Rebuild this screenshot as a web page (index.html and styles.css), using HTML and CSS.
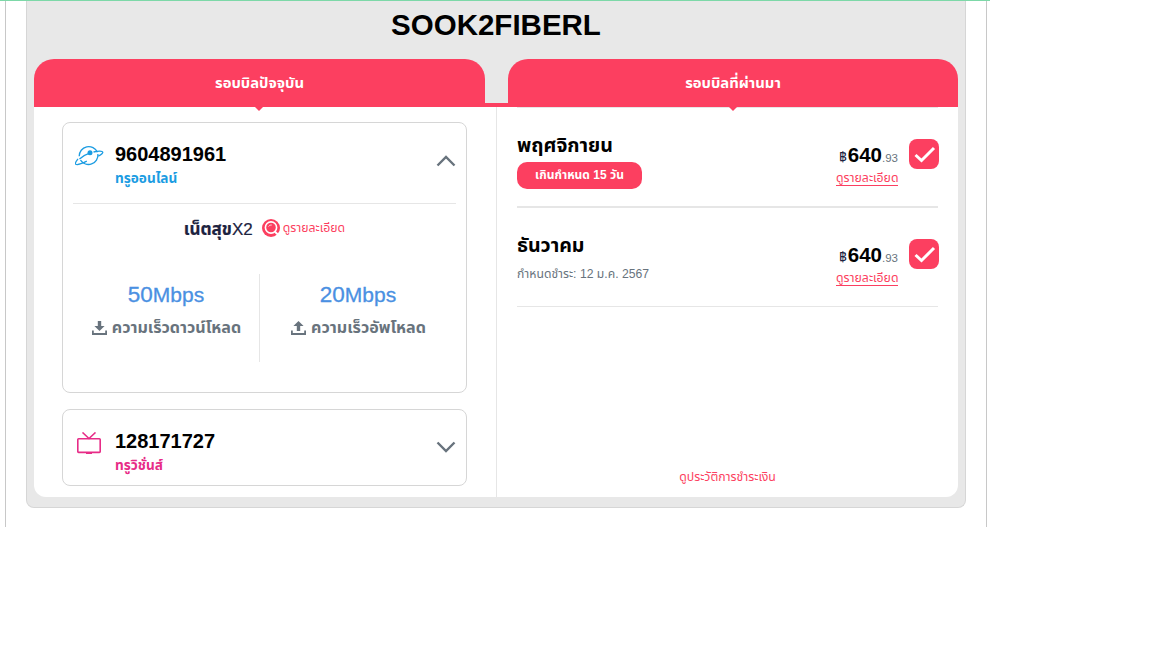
FILE: index.html
```
<!DOCTYPE html>
<html lang="th">
  <head>
    <meta charset="UTF-8" />
    <meta name="viewport" content="width=device-width, initial-scale=1.0" />
    <title>SOOK2FIBERL</title>
    <link rel="stylesheet" href="styles.css">
  </head>
  <body>
    <div class="top-line"></div>
    <main class="page">
      <section class="account">
        <h1 class="account-name">SOOK2FIBERL</h1>
        <div class="tabs">
          <div class="tab">รอบบิลปัจจุบัน</div>
          <div class="tab-joint"></div>
          <div class="tab">รอบบิลที่ผ่านมา</div>
        </div>
        <div class="panel">
          <div class="current">
            <div class="card card-online">
              <div class="card-head">
                <svg class="icon" width="30" height="22" viewBox="0 0 30 22" fill="none" stroke="#1b9ce2" stroke-width="1.3">
                  <path d="M4.200 11.300a9.500 9.500 0 0 1 18.200-4M22.900 9a9.500 9.500 0 0 1-17.400 6.200" />
                  <path d="M3 13.800C.8 16.500 0 18.500.8 19.200c1.500 1 6.500-.8 11-3" />
                  <path d="M4.500 14c2.500-2.400 6-4.400 9.500-5.600M18.500 7c5-1.300 9-1.300 9.300.1.200 1-1.800 2.600-4.500 4" />
                  <circle cx="15" cy="7.700" r="2.500" fill="#1b9ce2" stroke="none" />
                </svg>
                <div class="service">
                  <div class="number">9604891961</div>
                  <div class="kind online">ทรูออนไลน์</div>
                </div>
                <svg class="chevron" width="20" height="12" viewBox="0 0 20 12"><path d="M1.500 10.500 10 2l8.500 8.500" /></svg>
              </div>
              <div class="plan">
                <span class="plan-name"><b>เน็ตสุข</b>X2</span>
                <svg class="detail-icon" width="18" height="18" viewBox="0 0 18 18">
                  <circle cx="9" cy="9" r="9" fill="#fc3f60" />
                  <circle cx="9" cy="8.500" r="5.600" fill="none" stroke="#fff" stroke-width="1.600" />
                  <path d="M6.500 7.600q1-2 3.300-1.600" fill="none" stroke="#fff" stroke-width=".7" />
                  <path d="m12.500 12.300 4.500 4.400" stroke="#fff" stroke-width="1.900" />
                </svg>
                <a class="link">ดูรายละเอียด</a>
              </div>
              <div class="speeds">
                <div class="speed">
                  <div class="rate">50<small>Mbps</small></div>
                  <div class="direction">
                    <svg width="15" height="15" viewBox="0 0 15 15"><path d="M5.800 0h3.400v5h3.400L7.500 10 2.400 5h3.400zM0 9.500h1.800V12h11.400V9.500H15v4.500H0z" fill="#68737d" /></svg>
                    <span>ความเร็วดาวน์โหลด</span>
                  </div>
                </div>
                <div class="speed">
                  <div class="rate">20<small>Mbps</small></div>
                  <div class="direction">
                    <svg width="15" height="15" viewBox="0 0 15 15"><path d="M5.800 10h3.400V5h3.400L7.500 0 2.400 5h3.400zM0 9.500h1.800V12h11.400V9.500H15v4.500H0z" fill="#68737d" /></svg>
                    <span>ความเร็วอัพโหลด</span>
                  </div>
                </div>
              </div>
            </div>
            <div class="card card-tv">
              <div class="card-head">
                <svg class="icon" width="30" height="24" viewBox="0 0 30 24" fill="none" stroke="#e72c87" stroke-width="1.600">
                  <rect x="2.800" y="6.800" width="22.400" height="13.600" rx=".8" />
                  <path d="m7.500 .5 6.500 6L20.500 .5M11 21.300h6" />
                </svg>
                <div class="service">
                  <div class="number">128171727</div>
                  <div class="kind tv">ทรูวิชั่นส์</div>
                </div>
                <svg class="chevron" width="20" height="12" viewBox="0 0 20 12"><path d="m1.500 1.500 8.500 8.500 8.500-8.500" /></svg>
              </div>
            </div>
          </div>
          <div class="previous">
            <div class="bill overdue">
              <div class="bill-info">
                <div class="month">พฤศจิกายน</div>
                <div class="badge">เกินกำหนด 15 วัน</div>
              </div>
              <div class="bill-amount">
                <div class="price"><span class="baht">฿</span><b>640</b><span class="satang">.93</span></div>
                <a class="link underlined">ดูรายละเอียด</a>
              </div>
              <svg class="check" width="30" height="30" viewBox="0 0 30 30"><rect width="30" height="30" rx="8" /><path d="m6.500 16 6 5.500L25 9" /></svg>
            </div>
            <div class="bill">
              <div class="bill-info">
                <div class="month">ธันวาคม</div>
                <div class="due">กำหนดชำระ: 12 ม.ค. 2567</div>
              </div>
              <div class="bill-amount">
                <div class="price"><span class="baht">฿</span><b>640</b><span class="satang">.93</span></div>
                <a class="link underlined">ดูรายละเอียด</a>
              </div>
              <svg class="check" width="30" height="30" viewBox="0 0 30 30"><rect width="30" height="30" rx="8" /><path d="m6.500 16 6 5.500L25 9" /></svg>
            </div>
            <a class="link history">ดูประวัติการชำระเงิน</a>
          </div>
        </div>
      </section>
    </main>
  </body>
</html>
```
FILE: styles.css
```
* {
  box-sizing: border-box;
}
body {
  margin: 0;
  background: #fff;
  font-family: "Liberation Sans", "Noto Sans Thai", sans-serif;
  color: #000;
}
svg {
  display: block;
  flex: none;
}
.top-line {
  width: 990px;
  height: 1px;
  background: #7dd8a8;
}
.page {
  width: 982px;
  height: 526px;
  margin-left: 5px;
  padding: 0 20px;
  border: solid #c8c8c8;
  border-width: 0 1px;
}
.account {
  width: 940px;
  height: 507px;
  padding: 0 7px;
  background: #e8e8e8;
  border: 1px solid #d6d6d6;
  border-top: none;
  border-radius: 0 0 8px 8px;
}
.account-name {
  height: 58px;
  margin: 0;
  padding-top: 8px;
  font-size: 29.5px;
  line-height: 32px;
  text-align: center;
}
.tabs {
  display: flex;
  align-items: flex-end;
  height: 48px;
}
.tab {
  position: relative;
  z-index: 1;
  width: 451px;
  height: 48px;
  background: #fc3f60;
  border-radius: 20px 20px 0 0;
  color: #fff;
  font-size: 14.8px;
  font-weight: bold;
  line-height: 48px;
  text-align: center;
}
.tab:last-child {
  width: 450px;
}
.tab::after {
  content: "";
  position: absolute;
  top: 48px;
  left: 221px;
  border: 4px solid transparent;
  border-top-color: #fc3f60;
}
.tab-joint {
  width: 23px;
  height: 4px;
  background: #fc3f60;
}
.panel {
  display: flex;
  height: 390px;
  background: #fff;
  border-radius: 0 0 12px 12px;
}
.current {
  width: 463px;
  padding: 15px 29px 0 28px;
  border-right: 1px solid #e6e6e6;
}
.card {
  width: 405px;
  padding: 0 10px;
  border: 1px solid #d6d6d6;
  border-radius: 8px;
}
.card-online {
  height: 271px;
  margin-bottom: 16px;
}
.card-tv {
  height: 77px;
}
.card-head {
  display: flex;
  height: 81px;
  border-bottom: 1px solid #e6e6e6;
}
.card-tv .card-head {
  height: 75px;
  border: none;
}
.icon {
  margin: 22px 10px 0 2px;
}
.service {
  flex: 1;
  padding-top: 19px;
}
.number {
  height: 25px;
  font-size: 20px;
  font-weight: bold;
  line-height: 24px;
}
.kind {
  height: 22px;
  font-size: 13.6px;
  font-weight: bold;
  line-height: 23px;
}
.online {
  color: #1b9ce2;
}
.tv {
  color: #e72c87;
}
.chevron {
  margin-top: 32px;
  fill: none;
  stroke: #68737d;
  stroke-width: 2.4;
}
.card-tv .chevron {
  margin-top: 31px;
}
.plan {
  display: flex;
  align-items: center;
  justify-content: center;
  height: 49px;
  padding-bottom: 1px;
}
.plan-name {
  margin-right: 9px;
  padding-top: 3px;
  color: #1c2340;
  font-size: 17px;
  line-height: 24px;
  white-space: nowrap;
  -webkit-text-stroke: 0.2px;
}
.detail-icon {
  margin-right: 3px;
}
.link {
  color: #fc3f60;
  font-size: 12.3px;
  white-space: nowrap;
}
.speeds {
  display: flex;
  height: 88px;
  margin-top: 21px;
}
.speed {
  width: 187px;
  border-right: 1px solid #e6e6e6;
}
.speed + .speed {
  width: 196px;
  border: none;
}
.rate {
  height: 40px;
  color: #4a90e2;
  font-size: 22.5px;
  line-height: 41px;
  text-align: center;
  -webkit-text-stroke: 0.3px;
}
.rate small {
  font-size: 21px;
}
.direction {
  display: flex;
  align-items: center;
  justify-content: center;
  gap: 5px;
  height: 28px;
  padding-left: 1px;
  color: #68737d;
  font-size: 16.1px;
  font-weight: bold;
  white-space: nowrap;
}
.previous {
  display: flex;
  flex-direction: column;
  width: 461px;
  padding: 0 20px;
}
.bill {
  display: flex;
  height: 99px;
  border-bottom: 1px solid #e6e6e6;
}
.bill.overdue {
  height: 101px;
  border-top: 1px solid #e6e6e6;
  border-bottom-width: 2px;
}
.bill-info {
  flex: 1;
}
.month {
  height: 29px;
  margin-top: 23px;
  font-size: 19.6px;
  font-weight: bold;
  line-height: 28px;
}
.badge {
  width: 125px;
  height: 27px;
  margin-top: 2px;
  background: #fc3f60;
  border-radius: 10px;
  color: #fff;
  font-size: 12px;
  font-weight: bold;
  line-height: 27px;
  text-align: center;
}
.due {
  height: 26px;
  color: #68737d;
  font-size: 12.2px;
  line-height: 28px;
}
.bill-amount {
  display: flex;
  flex-direction: column;
  align-items: flex-end;
  margin-right: 11px;
}
.price {
  height: 24px;
  margin-top: 35px;
  color: #68737d;
  font-size: 11.5px;
  line-height: 24px;
}
.price b {
  color: #000;
  font-size: 20.5px;
}
.baht {
  margin-right: 1px;
  color: #1c2340;
  font-size: 13.5px;
}
.underlined {
  width: 62px;
  height: 19px;
  border-bottom: 1px solid #fc3f60;
  line-height: 22px;
}
.check {
  margin: 31px -1px 0 0;
  fill: #fc3f60;
}
.overdue .month {
  margin-top: 23px;
}
.check path {
  fill: none;
  stroke: #fff;
  stroke-width: 3;
}
.history {
  margin: auto 0 9px;
  line-height: 22px;
  text-align: center;
}
```
